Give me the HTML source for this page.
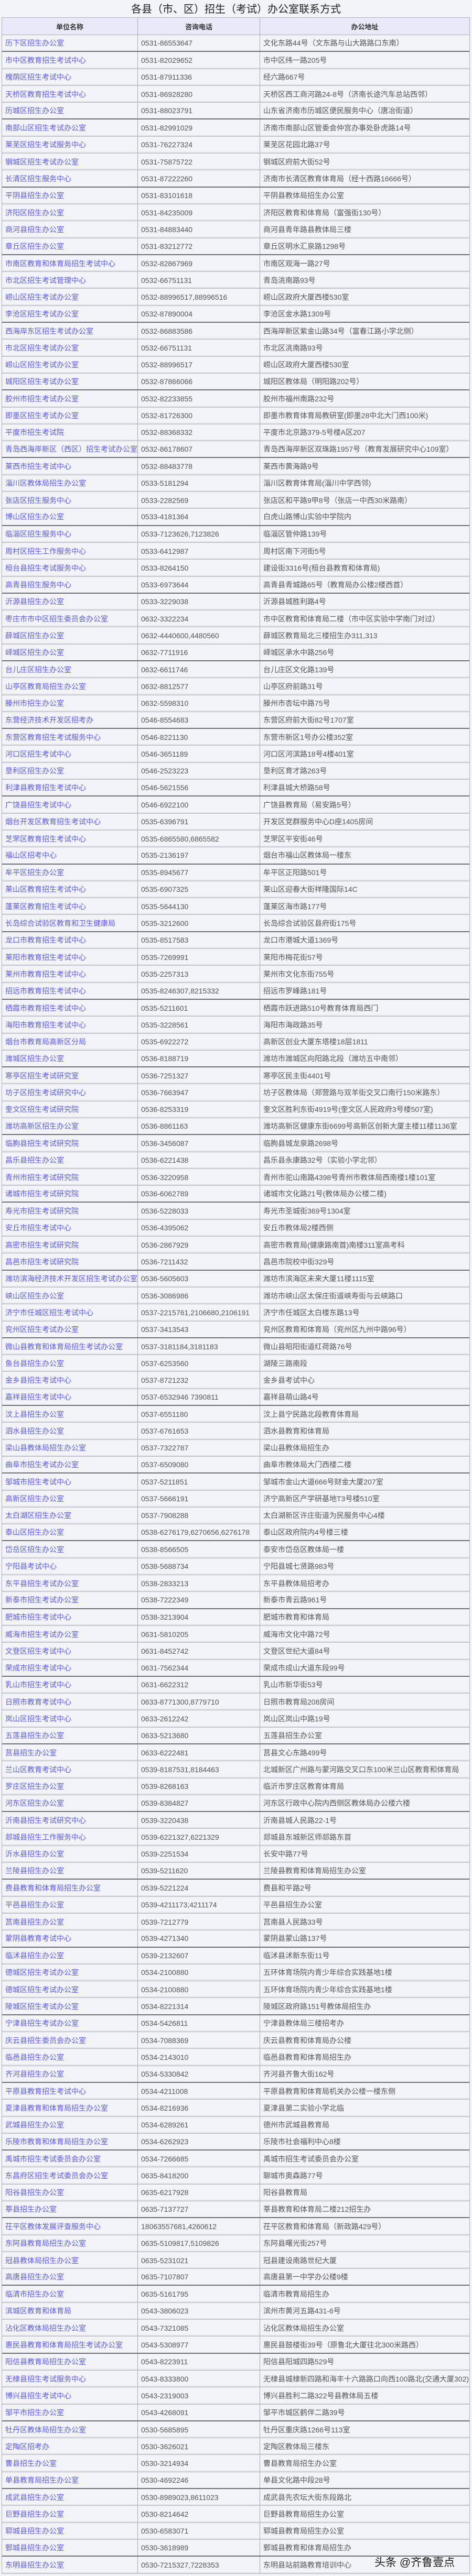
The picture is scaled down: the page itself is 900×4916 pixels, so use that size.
<!DOCTYPE html>
<html><head><meta charset="utf-8">
<style>
*{box-sizing:border-box;margin:0;padding:0}
html,body{width:900px;height:4916px;background:#f3f4f9;overflow:hidden}
body{font-family:"Liberation Sans","Noto Sans CJK SC",sans-serif;position:relative}
.title{position:absolute;top:3px;left:0;width:900px;text-align:center;font-size:20px;line-height:30px;color:#222;font-family:"Liberation Sans","Noto Sans CJK SC",sans-serif}
.tb{position:absolute;left:3px;top:33px;width:893px;border:1px solid #b0b0b6;border-bottom:none}
.h{height:33px;background:#e8e9f9;display:flex;border-bottom:1px solid #aaa;font-weight:bold;color:#333;font-size:13px}
.h span{display:flex;align-items:center;justify-content:center}
.r{height:32.31px;display:flex;border-bottom:1px solid #b8b8be;box-shadow:inset 0 -2px 0 #dfe0e6;font-size:14px;line-height:30px;white-space:nowrap}
.r.t{border-bottom:2px solid #707074;box-shadow:none}
.h span:nth-child(1),.r span:nth-child(1){width:259px;border-right:1px solid #a8a8ae}
.h span:nth-child(2),.r span:nth-child(2){width:233px;border-right:1px solid #a8a8ae}
.h span:nth-child(3),.r span:nth-child(3){flex:1}
.r span{padding-left:6px;overflow:hidden;display:flex;align-items:center}
.r span:nth-child(1){color:#5a5af2}
.r span:nth-child(2),.r span:nth-child(3){color:#555}
.wm{position:absolute;left:714px;top:4874px;font-size:21px;color:#111;text-shadow:0 0 2px #fff,0 0 2px #fff,1px 1px 1px #fff}
</style></head><body>
<div class="title">各县（市、区）招生（考试）办公室联系方式</div>
<div class="tb">
<div class="h"><span>单位名称</span><span>咨询电话</span><span>办公地址</span></div>
<div class="r t"><span>历下区招生办公室</span><span>0531-86553647</span><span>文化东路44号（文东路与山大路路口东南）</span></div>
<div class="r"><span>市中区教育招生考试中心</span><span>0531-82029652</span><span>市中区纬一路205号</span></div>
<div class="r"><span>槐荫区招生考试中心</span><span>0531-87911336</span><span>经六路667号</span></div>
<div class="r"><span>天桥区教育招生考试中心</span><span>0531-86928280</span><span>天桥区西工商河路24-8号（济南长途汽车总站西邻）</span></div>
<div class="r t"><span>历城区招生办公室</span><span>0531-88023791</span><span>山东省济南市历城区便民服务中心（唐冶街道）</span></div>
<div class="r"><span>南部山区招生考试办公室</span><span>0531-82991029</span><span>济南市南部山区管委会仲宫办事处卧虎路14号</span></div>
<div class="r"><span>莱芜区招生考试服务中心</span><span>0531-76227324</span><span>莱芜区花园北路37号</span></div>
<div class="r"><span>钢城区招生考试办公室</span><span>0531-75875722</span><span>钢城区府前大街52号</span></div>
<div class="r t"><span>长清区招生服务中心</span><span>0531-87222260</span><span>济南市长清区教育体育局（经十西路16666号）</span></div>
<div class="r"><span>平阴县招生办公室</span><span>0531-83101618</span><span>平阴县教体局招生办公室</span></div>
<div class="r"><span>济阳区招生办公室</span><span>0531-84235009</span><span>济阳区教育和体育局（富强街130号）</span></div>
<div class="r"><span>商河县招生办公室</span><span>0531-84883440</span><span>商河县青年路县教体局三楼</span></div>
<div class="r t"><span>章丘区招生办公室</span><span>0531-83212772</span><span>章丘区明水汇泉路1298号</span></div>
<div class="r"><span>市南区教育和体育局招生考试中心</span><span>0532-82867969</span><span>市南区观海一路27号</span></div>
<div class="r"><span>市北区招生考试管理中心</span><span>0532-66751131</span><span>青岛洮南路93号</span></div>
<div class="r"><span>崂山区招生考试办公室</span><span>0532-88996517,88996516</span><span>崂山区政府大厦西楼530室</span></div>
<div class="r t"><span>李沧区招生考试办公室</span><span>0532-87890004</span><span>李沧区金水路1309号</span></div>
<div class="r"><span>西海岸东区招生考试办公室</span><span>0532-86883586</span><span>西海岸新区紫金山路34号（富春江路小学北侧）</span></div>
<div class="r"><span>市北区招生考试办公室</span><span>0532-66751131</span><span>市北区洮南路93号</span></div>
<div class="r"><span>崂山区招生考试办公室</span><span>0532-88996517</span><span>崂山区政府大厦西楼530室</span></div>
<div class="r t"><span>城阳区招生考试办公室</span><span>0532-87866066</span><span>城阳区教体局（明阳路202号）</span></div>
<div class="r"><span>胶州市招生考试办公室</span><span>0532-82233855</span><span>胶州市福州南路232号</span></div>
<div class="r"><span>即墨区招生考试办公室</span><span>0532-81726300</span><span>即墨市教育体育局教研室(即墨28中北大门西100米)</span></div>
<div class="r"><span>平度市招生考试院</span><span>0532-88368332</span><span>平度市北京路379-5号楼A区207</span></div>
<div class="r t"><span>青岛西海岸新区（西区）招生考试办公室</span><span>0532-86178607</span><span>青岛西海岸新区双珠路1957号（教育发展研究中心109室）</span></div>
<div class="r"><span>莱西市招生考试中心</span><span>0532-88483778</span><span>莱西市黄海路9号</span></div>
<div class="r"><span>淄川区教体局招生办公室</span><span>0533-5181294</span><span>淄川区教育体育局(淄川中学西邻)</span></div>
<div class="r"><span>张店区招生服务中心</span><span>0533-2282569</span><span>张店区和平路9甲8号（张店一中西30米路南）</span></div>
<div class="r t"><span>博山区招生办公室</span><span>0533-4181364</span><span>白虎山路博山实验中学院内</span></div>
<div class="r"><span>临淄区招生服务中心</span><span>0533-7123626,7123826</span><span>临淄区管仲路139号</span></div>
<div class="r"><span>周村区招生工作服务中心</span><span>0533-6412987</span><span>周村区南下河街5号</span></div>
<div class="r"><span>桓台县招生考试服务中心</span><span>0533-8264150</span><span>建设街3316号(桓台县教育和体育局)</span></div>
<div class="r t"><span>高青县招生服务中心</span><span>0533-6973644</span><span>高青县青城路65号（教育局办公楼2楼西首）</span></div>
<div class="r"><span>沂源县招生办公室</span><span>0533-3229038</span><span>沂源县城胜利路4号</span></div>
<div class="r"><span>枣庄市市中区招生委员会办公室</span><span>0632-3322234</span><span>市中区教育和体育局二楼（市中区实验中学南门对过）</span></div>
<div class="r"><span>薛城区招生办公室</span><span>0632-4440600,4480560</span><span>薛城区教育局北三楼招生办311,313</span></div>
<div class="r t"><span>峄城区招生办公室</span><span>0632-7711916</span><span>峄城区承水中路256号</span></div>
<div class="r"><span>台儿庄区招生办公室</span><span>0632-6611746</span><span>台儿庄区文化路139号</span></div>
<div class="r"><span>山亭区教育局招生办公室</span><span>0632-8812577</span><span>山亭区府前路31号</span></div>
<div class="r"><span>滕州市招生办公室</span><span>0632-5598310</span><span>滕州市杏坛中路75号</span></div>
<div class="r t"><span>东营经济技术开发区招考办</span><span>0546-8554683</span><span>东营区府前大街82号1707室</span></div>
<div class="r"><span>东营区教育招生考试服务中心</span><span>0546-8221130</span><span>东营市新区1号办公楼352室</span></div>
<div class="r"><span>河口区招生考试中心</span><span>0546-3651189</span><span>河口区河滨路18号4楼401室</span></div>
<div class="r"><span>垦利区招生办公室</span><span>0546-2523223</span><span>垦利区育才路263号</span></div>
<div class="r t"><span>利津县教育招生考试中心</span><span>0546-5621556</span><span>利津县城大桥路58号</span></div>
<div class="r"><span>广饶县招生考试中心</span><span>0546-6922100</span><span>广饶县教育局（易安路5号）</span></div>
<div class="r"><span>烟台开发区教育招生考试中心</span><span>0535-6396791</span><span>开发区党群服务中心D座1405房间</span></div>
<div class="r"><span>芝罘区教育招生考试中心</span><span>0535-6865580,6865582</span><span>芝罘区平安街46号</span></div>
<div class="r t"><span>福山区招考中心</span><span>0535-2136197</span><span>烟台市福山区教体局一楼东</span></div>
<div class="r"><span>牟平区招生办公室</span><span>0535-8945677</span><span>牟平区正阳路501号</span></div>
<div class="r"><span>莱山区教育招生考试中心</span><span>0535-6907325</span><span>莱山区迎春大街祥隆国际14C</span></div>
<div class="r"><span>蓬莱区教育招生考试中心</span><span>0535-5644130</span><span>蓬莱区海市路177号</span></div>
<div class="r t"><span>长岛综合试验区教育和卫生健康局</span><span>0535-3212600</span><span>长岛综合试验区县府街175号</span></div>
<div class="r"><span>龙口市教育招生考试中心</span><span>0535-8517583</span><span>龙口市港城大道1369号</span></div>
<div class="r"><span>莱阳市教育招生考试中心</span><span>0535-7269991</span><span>莱阳市梅花街57号</span></div>
<div class="r"><span>莱州市教育招生考试中心</span><span>0535-2257313</span><span>莱州市文化东街755号</span></div>
<div class="r t"><span>招远市教育招生考试中心</span><span>0535-8246307,8215332</span><span>招远市罗峰路181号</span></div>
<div class="r"><span>栖霞市教育招生考试中心</span><span>0535-5211601</span><span>栖霞市跃进路510号教育体育局西门</span></div>
<div class="r"><span>海阳市教育招生考试中心</span><span>0535-3228561</span><span>海阳市海政路35号</span></div>
<div class="r"><span>烟台市教育局高新区分局</span><span>0535-6922272</span><span>高新区创业大厦东塔楼18层1811</span></div>
<div class="r t"><span>潍城区招生办公室</span><span>0536-8188719</span><span>潍坊市潍城区向阳路北段（潍坊五中南邻）</span></div>
<div class="r"><span>寒亭区招生考试研究室</span><span>0536-7251327</span><span>寒亭区民主街4401号</span></div>
<div class="r"><span>坊子区招生考试研究中心</span><span>0536-7663947</span><span>坊子区教体局（郑营路与双羊街交叉口南行150米路东）</span></div>
<div class="r"><span>奎文区招生考试研究院</span><span>0536-8253319</span><span>奎文区胜利东街4919号(奎文区人民政府3号楼507室)</span></div>
<div class="r t"><span>潍坊高新区招生办公室</span><span>0536-8861163</span><span>潍坊高新区健康东街6699号高新区创新大厦主楼11楼1136室</span></div>
<div class="r"><span>临朐县招生考试研究院</span><span>0536-3456087</span><span>临朐县城龙泉路2698号</span></div>
<div class="r"><span>昌乐县招生办公室</span><span>0536-6221438</span><span>昌乐县永康路32号（实验小学北邻）</span></div>
<div class="r"><span>青州市招生考试研究院</span><span>0536-3220958</span><span>青州市驼山南路4398号青州市教体局西南楼1楼101室</span></div>
<div class="r t"><span>诸城市招生考试研究院</span><span>0536-6062789</span><span>诸城市文化路21号(教体局办公楼二楼)</span></div>
<div class="r"><span>寿光市招生考试研究院</span><span>0536-5228033</span><span>寿光市圣城街369号1304室</span></div>
<div class="r"><span>安丘市招生考试中心</span><span>0536-4395062</span><span>安丘市教体局2楼西侧</span></div>
<div class="r"><span>高密市招生考试研究院</span><span>0536-2867929</span><span>高密市教育局(健康路南首)南楼311室高考科</span></div>
<div class="r t"><span>昌邑市招生考试研究院</span><span>0536-7211432</span><span>昌邑市院校中街329号</span></div>
<div class="r"><span>潍坊滨海经济技术开发区招生考试办公室</span><span>0536-5605603</span><span>潍坊市滨海区未来大厦11楼1115室</span></div>
<div class="r"><span>峡山区招生办公室</span><span>0536-3086986</span><span>潍坊市峡山区太保庄街道峡寿街与云峡路口</span></div>
<div class="r"><span>济宁市任城区招生考试中心</span><span>0537-2215761,2106680,2106191</span><span>济宁市任城区太白楼东路13号</span></div>
<div class="r t"><span>兖州区招生考试办公室</span><span>0537-3413543</span><span>兖州区教育和体育局（兖州区九州中路96号）</span></div>
<div class="r"><span>微山县教育和体育局招生考试办公室</span><span>0537-3181184,3181183</span><span>微山县昭阳街道红荷路76号</span></div>
<div class="r"><span>鱼台县招生办公室</span><span>0537-6253560</span><span>湖陵三路南段</span></div>
<div class="r"><span>金乡县招生考试中心</span><span>0537-8721232</span><span>金乡县考试中心</span></div>
<div class="r t"><span>嘉祥县招生考试中心</span><span>0537-6532946 7390811</span><span>嘉祥县萌山路4号</span></div>
<div class="r"><span>汶上县招生办公室</span><span>0537-6551180</span><span>汶上县宁民路北段教育体育局</span></div>
<div class="r"><span>泗水县招生办公室</span><span>0537-6761653</span><span>泗水县教育和体育局</span></div>
<div class="r"><span>梁山县教体局招生办公室</span><span>0537-7322787</span><span>梁山县教体局招生办</span></div>
<div class="r t"><span>曲阜市招生考试办公室</span><span>0537-6509080</span><span>曲阜市教体局大门西楼二楼</span></div>
<div class="r"><span>邹城市招生考试中心</span><span>0537-5211851</span><span>邹城市金山大道666号财金大厦207室</span></div>
<div class="r"><span>高新区招生办公室</span><span>0537-5666191</span><span>济宁高新区产学研基地T3号楼510室</span></div>
<div class="r"><span>太白湖区招生办公室</span><span>0537-7908288</span><span>太白湖新区许庄街道为民服务中心4楼</span></div>
<div class="r t"><span>泰山区招生办公室</span><span>0538-6276179,6270656,6276178</span><span>泰山区政府院内4号楼三楼</span></div>
<div class="r"><span>岱岳区招生办公室</span><span>0538-8566505</span><span>泰安市岱岳区教体局一楼</span></div>
<div class="r"><span>宁阳县考试中心</span><span>0538-5688734</span><span>宁阳县城七贤路983号</span></div>
<div class="r"><span>东平县招生考试办公室</span><span>0538-2833213</span><span>东平县教体局招考办</span></div>
<div class="r t"><span>新泰市招生考试办公室</span><span>0538-7222349</span><span>新泰市青云路961号</span></div>
<div class="r"><span>肥城市招生考试中心</span><span>0538-3213904</span><span>肥城市教育和体育局</span></div>
<div class="r"><span>威海市招生考试办公室</span><span>0631-5810205</span><span>威海市文化中路72号</span></div>
<div class="r"><span>文登区招生考试中心</span><span>0631-8452742</span><span>文登区世纪大道84号</span></div>
<div class="r t"><span>荣成市招生考试中心</span><span>0631-7562344</span><span>荣成市成山大道东段99号</span></div>
<div class="r"><span>乳山市招生考试中心</span><span>0631-6622312</span><span>乳山市新华街53号</span></div>
<div class="r"><span>日照市教育考试中心</span><span>0633-8771300,8779710</span><span>日照市教育局208房间</span></div>
<div class="r"><span>岚山区招生考试中心</span><span>0633-2612242</span><span>岚山区岚山中路19号</span></div>
<div class="r t"><span>五莲县招生办公室</span><span>0633-5213680</span><span>五莲县招生办公室</span></div>
<div class="r"><span>莒县招生办公室</span><span>0633-6222481</span><span>莒县文心东路499号</span></div>
<div class="r"><span>兰山区教育考试中心</span><span>0539-8187531,8184463</span><span>北城新区广州路与蒙河路交叉口东100米兰山区教育和体育局</span></div>
<div class="r"><span>罗庄区招生办公室</span><span>0539-8268163</span><span>临沂市罗庄区教育体育局</span></div>
<div class="r t"><span>河东区招生办公室</span><span>0539-8384827</span><span>河东区行政中心院内西侧区教体局办公楼六楼</span></div>
<div class="r"><span>沂南县招生考试研究中心</span><span>0539-3220438</span><span>沂南县城人民路22-1号</span></div>
<div class="r"><span>郯城县招生工作服务中心</span><span>0539-6221327,6221329</span><span>郯城县东城新区师郯路东首</span></div>
<div class="r"><span>沂水县招生办公室</span><span>0539-2251534</span><span>长安中路77号</span></div>
<div class="r t"><span>兰陵县招生办公室</span><span>0539-5211620</span><span>兰陵县教育和体育局招生办公室</span></div>
<div class="r"><span>费县教育和体育局招生办公室</span><span>0539-5221224</span><span>费县和平路2号</span></div>
<div class="r"><span>平邑县招生办公室</span><span>0539-4211173;4211174</span><span>平邑县招生办公室</span></div>
<div class="r"><span>莒南县招生办公室</span><span>0539-7212779</span><span>莒南县人民路33号</span></div>
<div class="r t"><span>蒙阴县教育考试中心</span><span>0539-4271340</span><span>蒙阴县蒙山路137号</span></div>
<div class="r"><span>临沭县招生办公室</span><span>0539-2132607</span><span>临沭县沭新东街11号</span></div>
<div class="r"><span>德城区招生考试办公室</span><span>0534-2100880</span><span>五环体育场院内青少年综合实践基地1楼</span></div>
<div class="r"><span>德城区招生考试办公室</span><span>0534-2100880</span><span>五环体育场院内青少年综合实践基地1楼</span></div>
<div class="r t"><span>陵城区招生考试办公室</span><span>0534-8221314</span><span>陵城区政府路151号教体局招生办</span></div>
<div class="r"><span>宁津县招生考试办公室</span><span>0534-5426811</span><span>宁津县教体局三楼招考办</span></div>
<div class="r"><span>庆云县招生委员会办公室</span><span>0534-7088369</span><span>庆云县教育和体育局办公楼</span></div>
<div class="r"><span>临邑县招生办公室</span><span>0534-2143010</span><span>临邑县教育和体育局招生办</span></div>
<div class="r t"><span>齐河县招生办公室</span><span>0534-5330842</span><span>齐河县齐鲁大街162号</span></div>
<div class="r"><span>平原县教育招生考试中心</span><span>0534-4211008</span><span>平原县教育和体育局机关办公楼一楼东侧</span></div>
<div class="r"><span>夏津县教育和体育局招生办公室</span><span>0534-8216936</span><span>夏津县第二实验小学北临</span></div>
<div class="r"><span>武城县招生办公室</span><span>0534-6289261</span><span>德州市武城县教育局</span></div>
<div class="r t"><span>乐陵市教育和体育局招生办公室</span><span>0534-6262923</span><span>乐陵市社会福利中心8楼</span></div>
<div class="r"><span>禹城市招生考试委员会办公室</span><span>0534-7266685</span><span>禹城市招生考试委员会办公室</span></div>
<div class="r"><span>东昌府区招生考试委员会办公室</span><span>0635-8418200</span><span>聊城市奥森路77号</span></div>
<div class="r"><span>阳谷县招生办公室</span><span>0635-6217928</span><span>阳谷县教育局</span></div>
<div class="r t"><span>莘县招生办公室</span><span>0635-7137727</span><span>莘县教育和体育局二楼212招生办</span></div>
<div class="r"><span>茌平区教体发展评查服务中心</span><span>18063557681,4260612</span><span>茌平区教育和体育局（新政路429号）</span></div>
<div class="r"><span>东阿县教育局招生办公室</span><span>0635-5109817,5109826</span><span>东阿县曙光街257号</span></div>
<div class="r"><span>冠县教体局招生办公室</span><span>0635-5231021</span><span>冠县建设南路世纪大厦</span></div>
<div class="r t"><span>高唐县招生办公室</span><span>0635-7107807</span><span>高唐县第一中学办公楼9楼</span></div>
<div class="r"><span>临清市招生办公室</span><span>0635-5161795</span><span>临清市教育局招生办</span></div>
<div class="r"><span>滨城区教育和体育局</span><span>0543-3806023</span><span>滨州市黄河五路431-6号</span></div>
<div class="r"><span>沾化区教体局招生办公室</span><span>0543-7321085</span><span>沾化区教体局招生办公室</span></div>
<div class="r t"><span>惠民县教育和体育局招生考试办公室</span><span>0543-5308977</span><span>惠民县鼓楼街39号（原鲁北大厦往北300米路西）</span></div>
<div class="r"><span>阳信县教育局招生办公室</span><span>0543-8223911</span><span>阳信县阳城四路529号</span></div>
<div class="r"><span>无棣县招生考试服务中心</span><span>0543-8333800</span><span>无棣县城棣新四路和海丰十六路路口向西100路北(交通大厦302)</span></div>
<div class="r"><span>博兴县招生考试中心</span><span>0543-2319003</span><span>博兴县胜利二路322号县教体局五楼</span></div>
<div class="r t"><span>邹平市招生办公室</span><span>0543-4268091</span><span>邹平市城区鹤伴二路39号</span></div>
<div class="r"><span>牡丹区教体局招生办公室</span><span>0530-5685895</span><span>牡丹区重庆路1266号113室</span></div>
<div class="r"><span>定陶区招考办</span><span>0530-3626021</span><span>定陶区教体局三楼东</span></div>
<div class="r"><span>曹县招生办公室</span><span>0530-3214934</span><span>曹县教育局招生办公室</span></div>
<div class="r t"><span>单县教育局招生办公室</span><span>0530-4692246</span><span>单县文化路中段28号</span></div>
<div class="r"><span>成武县招生办公室</span><span>0530-8989023,8611023</span><span>成武县先农坛大街东段路北</span></div>
<div class="r"><span>巨野县招生办公室</span><span>0530-8214642</span><span>巨野县教育局招生办公室</span></div>
<div class="r"><span>郓城县招生办公室</span><span>0530-6583071</span><span>郓城县教育局招生办公室</span></div>
<div class="r t"><span>鄄城县招生办公室</span><span>0530-3618989</span><span>鄄城县教育和体育局招生办</span></div>
<div class="r"><span>东明县招生办公室</span><span>0530-7215327,7228353</span><span>东明县站前路教育培训中心</span></div>
</div>
<div class="wm">头条 @齐鲁壹点</div>
</body></html>
